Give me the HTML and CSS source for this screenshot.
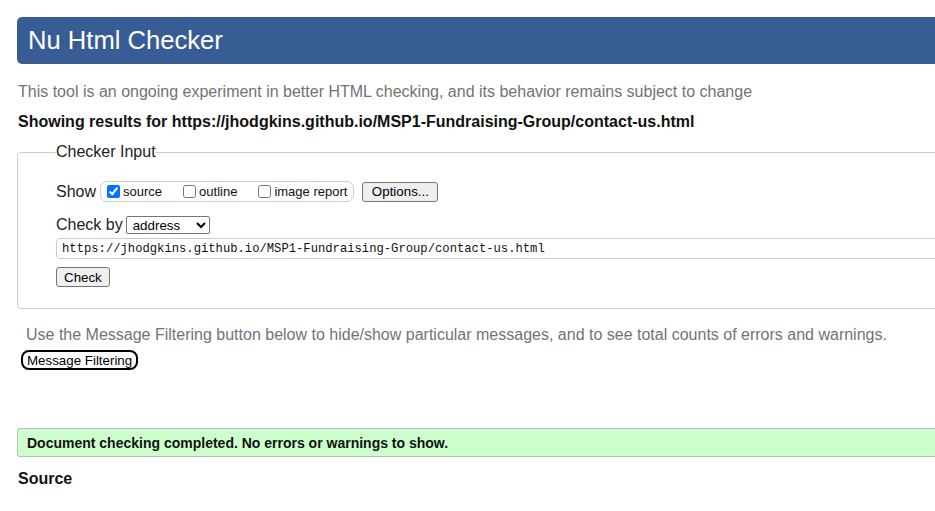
FILE: index.html
```html
<!DOCTYPE html>
<html lang="en">
<head>
<meta charset="utf-8">
<title>Nu Html Checker</title>
<link rel="stylesheet" href="styles.css">
</head>
<body>
<h1 class="title">Nu Html Checker</h1>
<p class="about">This tool is an ongoing experiment in better HTML checking, and its behavior remains subject to change</p>
<p class="results">Showing results for https://jhodgkins.github.io/MSP1-Fundraising-Group/contact-us.html</p>
<form class="checker">
  <fieldset class="checker-box">
    <legend class="checker-legend">Checker Input</legend>
    <div class="row show-row">
      <span class="row-label">Show</span>
      <span class="show-group">
        <label class="opt"><input type="checkbox" checked>source</label>
        <label class="opt"><input type="checkbox">outline</label>
        <label class="opt"><input type="checkbox">image report</label>
      </span>
      <button type="button" class="btn btn-options">Options...</button>
    </div>
    <div class="row by-row">
      <span class="row-label">Check by</span>
      <select class="by-select"><option>address</option><option>file upload</option><option>text input</option></select>
    </div>
    <input class="url-input" type="text" value="https://jhodgkins.github.io/MSP1-Fundraising-Group/contact-us.html">
    <button type="button" class="btn btn-check">Check</button>
  </fieldset>
</form>
<p class="filter-note">Use the Message Filtering button below to hide/show particular messages, and to see total counts of errors and warnings.</p>
<button type="button" class="btn-filter">Message Filtering</button>
<p class="success">Document checking completed. No errors or warnings to show.</p>
<h2 class="source-title">Source</h2>
</body>
</html>
```
FILE: styles.css
```css
html {
  overflow: hidden;
}
body {
  margin: 0;
  padding: 17px 0 0 17px;
  width: 1100px;
  font-family: "Liberation Sans", Arial, sans-serif;
  color: #111;
  background: #fff;
}
.title {
  margin: 0;
  height: 47px;
  line-height: 47px;
  padding-left: 11px;
  font-size: 25.6px;
  font-weight: normal;
  color: #fff;
  background: #385d94;
  border-radius: 5px;
}
.about {
  margin: 19px 0 0 1px;
  font-size: 16px;
  line-height: 18px;
  color: #737373;
}
.results {
  margin: 12px 0 0 1px;
  font-size: 16px;
  line-height: 18px;
  font-weight: bold;
  color: #111;
}
.checker {
  margin: 12px 0 0 0;
}
.checker-box {
  margin: 0;
  padding: 0 0 21px 38px;
  border: 1px solid #ccc;
  border-radius: 4px;
  min-width: 0;
}
.checker-legend {
  padding: 0;
  font-size: 16px;
  line-height: 18px;
  color: #222;
}
.row {
  display: flex;
  align-items: center;
  gap: 4px;
}
.row-label {
  font-size: 16px;
  line-height: 18px;
  color: #222;
}
.show-row {
  margin-top: 20px;
  height: 21px;
}
.show-group {
  display: inline-flex;
  align-items: center;
  height: 19px;
  padding: 0 6px 0 2px;
  border: 1px solid #ccc;
  border-radius: 7px;
  gap: 17px;
}
.opt {
  display: inline-flex;
  align-items: center;
  font-size: 13px;
  color: #111;
}
.opt input {
  margin: 0 3px 0 4px;
  width: 13px;
  height: 13px;
}
.btn {
  font-family: "Liberation Sans", Arial, sans-serif;
  font-size: 13.33px;
  color: #000;
  background: #efefef;
  border: 1px solid #767676;
  border-radius: 3px;
  height: 20px;
  padding: 0 7px;
  box-sizing: border-box;
}
.btn-options {
  margin-left: 4px;
  padding: 0 8.5px;
}
.by-row {
  margin-top: 14px;
  height: 18px;
  gap: 3px;
}
.by-select {
  width: 84px;
  height: 18px;
  font-family: "Liberation Sans", Arial, sans-serif;
  font-size: 13.33px;
  color: #000;
  border: 1px solid #767676;
  border-radius: 2px;
  background: #fff;
  padding: 0 0 0 2px;
}
.url-input {
  display: block;
  margin-top: 4px;
  width: 1000px;
  height: 21px;
  box-sizing: border-box;
  padding: 0 5px;
  border: 1px solid #ccc;
  border-radius: 4px;
  font-family: "Liberation Mono", "DejaVu Sans Mono", monospace;
  font-size: 12.2px;
  color: #111;
}
.btn-check {
  display: block;
  margin-top: 8px;
}
.filter-note {
  margin: 17px 0 0 9px;
  font-size: 16px;
  line-height: 18px;
  color: #737373;
}
.btn-filter {
  display: block;
  margin: 6px 0 0 4px;
  height: 20px;
  padding: 0 4px;
  font-family: "Liberation Sans", Arial, sans-serif;
  font-size: 13.33px;
  color: #000;
  background: #fff;
  border: 2px solid #000;
  border-radius: 8px;
}
.success {
  margin: 58px 0 0 0;
  height: 29px;
  box-sizing: border-box;
  padding: 2px 9px 0;
  line-height: 24px;
  font-size: 14px;
  font-weight: bold;
  color: #111;
  background: #ccffcc;
  border: 1px solid #bbb;
  border-right: none;
  border-radius: 3px 0 0 3px;
}
.source-title {
  margin: 13px 0 0 1px;
  font-size: 16px;
  line-height: 18px;
  font-weight: bold;
  color: #111;
}
```
